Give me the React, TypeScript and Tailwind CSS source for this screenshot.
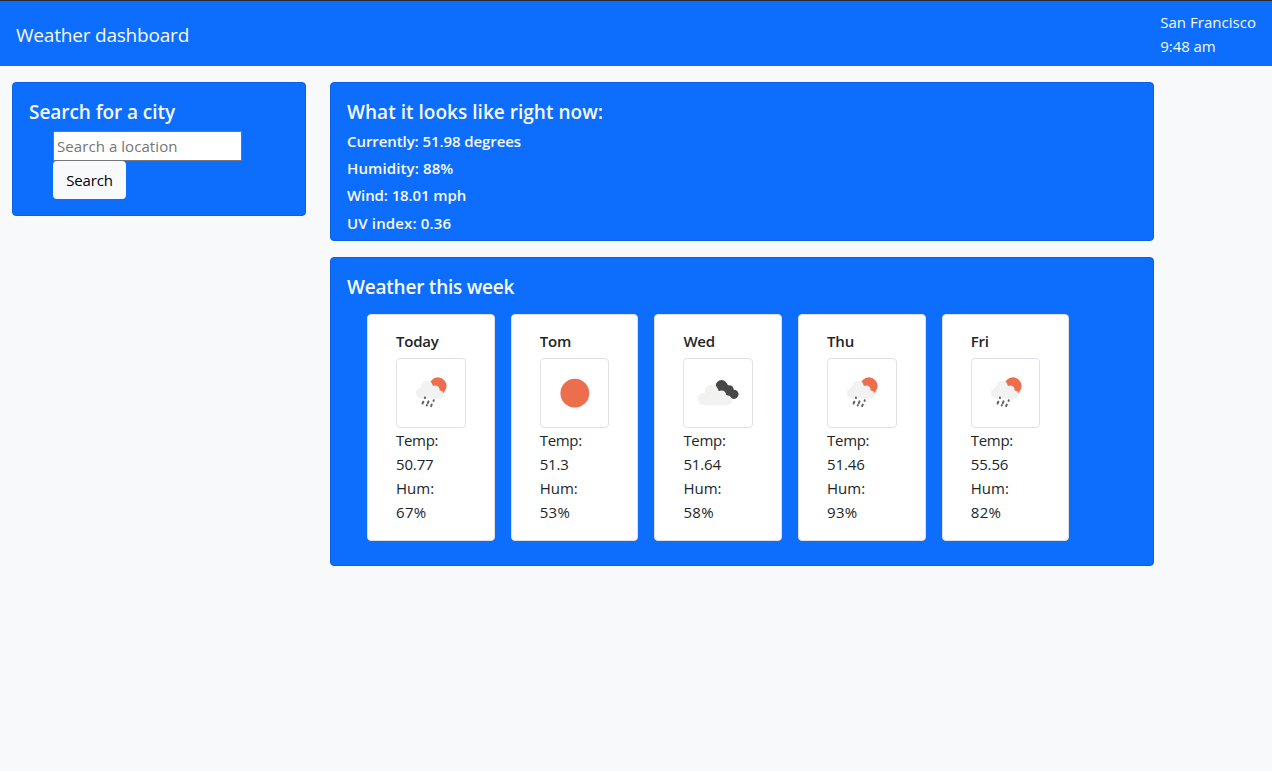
import React from "react";

type Kind = "rain" | "sun" | "clouds";

const days: { name: string; kind: Kind; temp: string; hum: string }[] = [
  { name: "Today", kind: "rain", temp: "50.77", hum: "67%" },
  { name: "Tom", kind: "sun", temp: "51.3", hum: "53%" },
  { name: "Wed", kind: "clouds", temp: "51.64", hum: "58%" },
  { name: "Thu", kind: "rain", temp: "51.46", hum: "93%" },
  { name: "Fri", kind: "rain", temp: "55.56", hum: "82%" },
];

function WeatherIcon({ kind }: { kind: Kind }) {
  if (kind === "sun") {
    return (
      <svg viewBox="0 0 70 70" className="block w-full">
        <circle cx="35" cy="35.3" r="14.9" fill="#ec6e4c" />
      </svg>
    );
  }
  if (kind === "clouds") {
    return (
      <svg viewBox="0 0 70 70" className="block w-full">
        <g fill="#484848">
          <circle cx="38.8" cy="27.8" r="6" />
          <circle cx="47" cy="31.5" r="4.4" />
          <circle cx="51.6" cy="36.5" r="4.8" />
          <path d="M35 30l9-5 6 8-1 7-6-3z" />
        </g>
        <g fill="#f2f2f1">
          <circle cx="20.8" cy="41.3" r="6.5" />
          <circle cx="28.5" cy="33.3" r="7" />
          <circle cx="38.8" cy="37.3" r="4.8" />
          <circle cx="44.8" cy="42.8" r="5" />
          <path d="M21 36h19l5 6v5.8H21z" />
        </g>
      </svg>
    );
  }
  return (
    <svg viewBox="0 0 70 70" className="block w-full">
      <circle cx="42.3" cy="28" r="9" fill="#ec6e4c" />
      <g fill="#f2f2f2">
        <circle cx="25" cy="35.2" r="5.6" />
        <circle cx="31" cy="28.8" r="6.2" />
        <circle cx="39.5" cy="32" r="4.6" />
        <circle cx="43.8" cy="36.8" r="4.2" />
        <path d="M25 31h15l4 5v5H25z" />
      </g>
      <g stroke="#484848" strokeWidth="2.1" strokeLinecap="round" opacity="0.85">
        <path d="M28.9 39.8v.5M27.2 44.2l-.8 1.8M32.6 43.8l-.8 1.8M38 42.7l-.2.6M30.9 47.7l-.1.3M35.9 47.2l-.6 1.5" />
      </g>
    </svg>
  );
}

export default function App() {
  return (
    <div className="min-h-[771px] bg-[#f8f9fa] font-['Open_Sans','Noto_Sans',sans-serif] text-base text-[#212529]">
      <header className="flex h-[66px] items-center justify-between border-t border-[#2b2b2b] bg-[#0d6efd] px-4 text-[#f8f9fa]">
        <h1 className="mt-0.5 text-[19px] leading-[30px] tracking-[-0.2px]">Weather dashboard</h1>
        <div className="text-[15px] leading-6">
          <p className="tracking-[0.03px]">San Francisco</p>
          <p className="tracking-[-0.05px]">9:48 am</p>
        </div>
      </header>

      <main className="flex items-start gap-6 px-3 pt-4">
        <section className="h-[134px] w-[294px] rounded border border-[#0b61df] bg-[#0d6efd] p-4">
          <h2 className="mb-[7px] mt-[1px] text-[19px] font-semibold leading-6 tracking-[-0.06px] text-[#f8f9fa]">Search for a city</h2>
          <div className="flex flex-col items-start pl-6">
            <input
              className="h-[30px] w-[189px] border border-[#767676] bg-white px-[3px] text-[15px] tracking-[0.07px] text-black outline-none placeholder:text-[#757575]"
              placeholder="Search a location"
            />
            <button className="h-[38px] w-[73px] rounded bg-[#f8f9fa] text-[15px] tracking-[-0.17px] text-black">Search</button>
          </div>
        </section>

        <div className="flex w-[824px] flex-col gap-4">
          <section className="h-[159px] rounded border border-[#0b61df] bg-[#0d6efd] px-4 pt-4 text-[#f8f9fa]">
            <h2 className="mt-[1px] text-[19px] font-semibold leading-6 tracking-[0.03px]">What it looks like right now:</h2>
            <ul className="mt-1 text-[15px] font-semibold leading-[27.2px]">
              <li className="tracking-[-0.08px]">Currently: 51.98 degrees</li>
              <li className="tracking-[0.12px]">Humidity: 88%</li>
              <li className="tracking-[-0.1px]">Wind: 18.01 mph</li>
              <li className="tracking-[0.15px]">UV index: 0.36</li>
            </ul>
          </section>

          <section className="h-[309px] rounded border border-[#0b61df] bg-[#0d6efd] px-4 pt-4">
            <h2 className="mt-[1px] text-[19px] font-semibold leading-6 tracking-[-0.22px] text-[#f8f9fa]">Weather this week</h2>
            <div className="mt-[15px] flex gap-4 pl-5">
              {days.map((d) => (
                <article key={d.name} className="h-[227px] w-[127.7px] rounded border border-[#dfdfdf] bg-white px-7 pt-[17px]">
                  <h3 className="mb-[7px] text-[15px] font-semibold leading-[19px] tracking-[-0.2px]">{d.name}</h3>
                  <div className="h-[70px] rounded border border-[#dee2e6]">
                    <WeatherIcon kind={d.kind} />
                  </div>
                  <p className="text-[15px] leading-6 tracking-[-0.3px]">Temp:</p>
                  <p className="text-[15px] leading-6 tracking-[-0.15px]">{d.temp}</p>
                  <p className="text-[15px] leading-6">Hum:</p>
                  <p className="text-[15px] leading-6 tracking-[0.3px]">{d.hum}</p>
                </article>
              ))}
            </div>
          </section>
        </div>
      </main>
    </div>
  );
}
